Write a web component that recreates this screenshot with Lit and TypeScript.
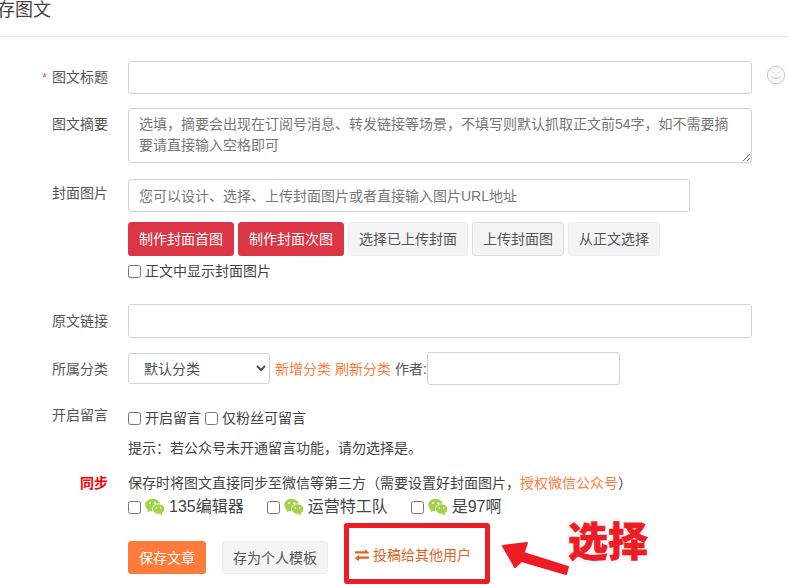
import { LitElement, html, css, svg } from "lit";
import { customElement } from "lit/decorators.js";

const wechat = svg`<svg class="wx" viewBox="0 0 20 18" width="20" height="18"><ellipse cx="7.6" cy="7" rx="7.4" ry="6.2" fill="#a3d24c"/><path d="M3 11l-.6 3.4 3.6-2z" fill="#a3d24c"/><ellipse cx="13.6" cy="11" rx="6.2" ry="5.2" fill="#a3d24c" stroke="#fff" stroke-width=".8"/><path d="M16.5 14.5l1 3-3.4-1.8z" fill="#a3d24c"/><circle cx="5" cy="5.2" r=".9" fill="#fff"/><circle cx="10" cy="5.2" r=".9" fill="#fff"/><circle cx="11.4" cy="10" r=".7" fill="#fff"/><circle cx="15.6" cy="10" r=".7" fill="#fff"/></svg>`;

@customElement("app-root")
export class AppRoot extends LitElement {
  static styles = css`
    :host { display: block; position: relative; width: 788px; height: 585px; overflow: hidden; background: #fff; color: #444;
      font-family: "Liberation Sans", "Noto Sans CJK SC", sans-serif; font-size: 14px; line-height: 20px; }
    * { box-sizing: border-box; }
    .head { height: 37px; border-bottom: 1px solid #e2e4e8; }
    .head span { display: block; margin-left: -21px; font-size: 18px; line-height: 20px; padding-top: 0; color: #444; }
    .row { display: flex; align-items: flex-start; }
    .label { width: 108px; padding-right: 0; margin-right: 20px; text-align: right; flex: none; color: #555; }
    .req { color: #f44; margin-right: 5px; font-size: 12px; }
    .red { color: #f00; font-weight: 700; }
    input[type=text], textarea, select { border: 1px solid #ced2da; border-radius: 3px; background: #fff; font: inherit; color: #495057; margin: 0; outline: none; }
    input[type=text]::placeholder, textarea::placeholder { color: #777; opacity: 1; }
    .wide { width: 624px; height: 33px; padding: 0 12px; display: block; }
    .wide.tall { height: 34px; }
    textarea { width: 624px; height: 55px; display: block; padding: 5px 10px; line-height: 21px; resize: vertical; }
    .cover { width: 562px; height: 33px; padding: 0 10px; display: block; }
    .r1 { margin-top: 24px; }
    .r1 .label { padding-top: 6px; }
    .face { margin-left: 14px; margin-top: 4px; flex: none; }
    .r2 { margin-top: 14px; }
    .r2 .label { padding-top: 6px; }
    .r3 { margin-top: 16px; }
    .r3 .label { padding-top: 4px; }
    .btns { display: flex; gap: 4px; margin-top: 10px; }
    .btn { height: 34px; padding: 0 10px; border: 1px solid #eee; border-radius: 3px; background: #f4f4f4; color: #555; display: flex; align-items: center; white-space: nowrap; }
    .btn.dark { border-color: #ddd; }
    .btn.primary { background: #dc3545; border-color: #dc3545; color: #fff; }
    .btn.orange { background: #ff7b3c; border-color: #ff7b3c; color: #fff; }
    .check { display: flex; align-items: center; gap: 4px; }
    input[type=checkbox] { margin: 0; width: 13px; height: 13px; flex: none; }
    .r3 .check { margin-top: 5px; }
    .r4 { margin-top: 23px; }
    .r4 .label { padding-top: 7px; }
    .r5 { margin-top: 14px; align-items: center; }
    .r5 select { width: 142px; height: 31px; padding: 0 11px; }
    .links { margin-left: 5px; color: #ff7b3c; white-space: nowrap; }
    .author { margin-left: 4px; white-space: nowrap; color: #555; }
    .r5 input { width: 193px; height: 33px; }
    .r6 { margin-top: 20px; }
    .r6 .label { padding-top: 0; }
    .inline { display: flex; gap: 4px; align-items: center; height: 20px; margin-top: 3px; }
    .tip { margin-top: 10px; }
    .r7 { margin-top: 15px; }
    .note { height: 20px; white-space: nowrap; }
    .note a { color: #ff7b3c; }
    .accts { display: flex; gap: 23px; margin-top: 3px; font-size: 16px; height: 22px; align-items: center; }
    .acct { display: flex; align-items: center; gap: 4px; }
    .wx { flex: none; }
    .actions { display: flex; gap: 16px; margin: 23px 0 0 128px; align-items: center; }
    .actions .btn { height: 33px; }
    .send { margin: 0 0 5px 11px; color: #e4631c; display: flex; align-items: center; gap: 4px; white-space: nowrap; }
    .box { position: absolute; left: 344px; top: 523px; width: 146px; height: 61px; border: 5px solid #ee1c25; border-radius: 3px; }
    .arrow { position: absolute; left: 495px; top: 535px; }
    .pick { position: absolute; left: 568px; top: 511px; font-size: 40px; line-height: 56px; font-weight: 900; color: #ee1c25; font-family: "Noto Sans CJK SC", sans-serif;
      -webkit-text-stroke: 0.6px #ee1c25;
      text-shadow: 2px 0 1px #fff, -2px 0 1px #fff, 0 2px 1px #fff, 0 -2px 1px #fff, 0 0 5px #bbb; white-space: nowrap; }
  `;

  render() {
    return html`
      <div class="head"><span>保存图文</span></div>
      <div class="row r1">
        <div class="label"><span class="req">*</span>图文标题</div>
        <input type="text" class="wide" />
        <svg class="face" width="20" height="20" viewBox="0 0 20 20" fill="none" stroke="#c4c4c4" stroke-width="1"><circle cx="10" cy="10" r="8.6"/><path d="M5.4 11c1 3.4 8.2 3.4 9.2 0"/><path d="M6.4 8c.4-1 1.4-1 1.8 0M11.8 8c.4-1 1.4-1 1.8 0" /></svg>
      </div>
      <div class="row r2">
        <div class="label">图文摘要</div>
        <textarea placeholder="选填，摘要会出现在订阅号消息、转发链接等场景，不填写则默认抓取正文前54字，如不需要摘要请直接输入空格即可"></textarea>
      </div>
      <div class="row r3">
        <div class="label">封面图片</div>
        <div>
          <input type="text" class="cover" placeholder="您可以设计、选择、上传封面图片或者直接输入图片URL地址" />
          <div class="btns">
            <div class="btn primary">制作封面首图</div>
            <div class="btn primary">制作封面次图</div>
            <div class="btn">选择已上传封面</div>
            <div class="btn dark">上传封面图</div>
            <div class="btn">从正文选择</div>
          </div>
          <label class="check"><input type="checkbox" />正文中显示封面图片</label>
        </div>
      </div>
      <div class="row r4">
        <div class="label">原文链接</div>
        <input type="text" class="wide tall" />
      </div>
      <div class="row r5">
        <div class="label">所属分类</div>
        <select><option>默认分类</option></select>
        <span class="links">新增分类 刷新分类</span>
        <span class="author">作者:</span>
        <input type="text" />
      </div>
      <div class="row r6">
        <div class="label">开启留言</div>
        <div>
          <div class="inline"><input type="checkbox" />开启留言<input type="checkbox" />仅粉丝可留言</div>
          <div class="tip">提示：若公众号未开通留言功能，请勿选择是。</div>
        </div>
      </div>
      <div class="row r7">
        <div class="label red">同步</div>
        <div>
          <div class="note">保存时将图文直接同步至微信等第三方（需要设置好封面图片，<a>授权微信公众号</a>）</div>
          <div class="accts">
            <label class="acct"><input type="checkbox" />${wechat}135编辑器</label>
            <label class="acct"><input type="checkbox" />${wechat}运营特工队</label>
            <label class="acct"><input type="checkbox" />${wechat}是97啊</label>
          </div>
        </div>
      </div>
      <div class="actions">
        <div class="btn orange">保存文章</div>
        <div class="btn">存为个人模板</div>
        <div class="send">
          <svg width="14" height="12" viewBox="0 0 14 12" fill="#e4631c"><path d="M0 2.2h10V0l4 3.8v.6H0z"/><path d="M14 7.6H4V5.8L0 9.4v.4l4 2.2v-2.2h10z"/></svg>
          投稿给其他用户
        </div>
      </div>
      <div class="box"></div>
      <svg class="arrow" width="80" height="45" viewBox="0 0 80 45"><path d="M8 11L32 8 28.5 18 73 32 71 39 26.5 26 20 32z" fill="#ee1c25" stroke="#ee1c25" stroke-width="2" stroke-linejoin="round"/></svg>
      <div class="pick">选择</div>
    `;
  }
}
